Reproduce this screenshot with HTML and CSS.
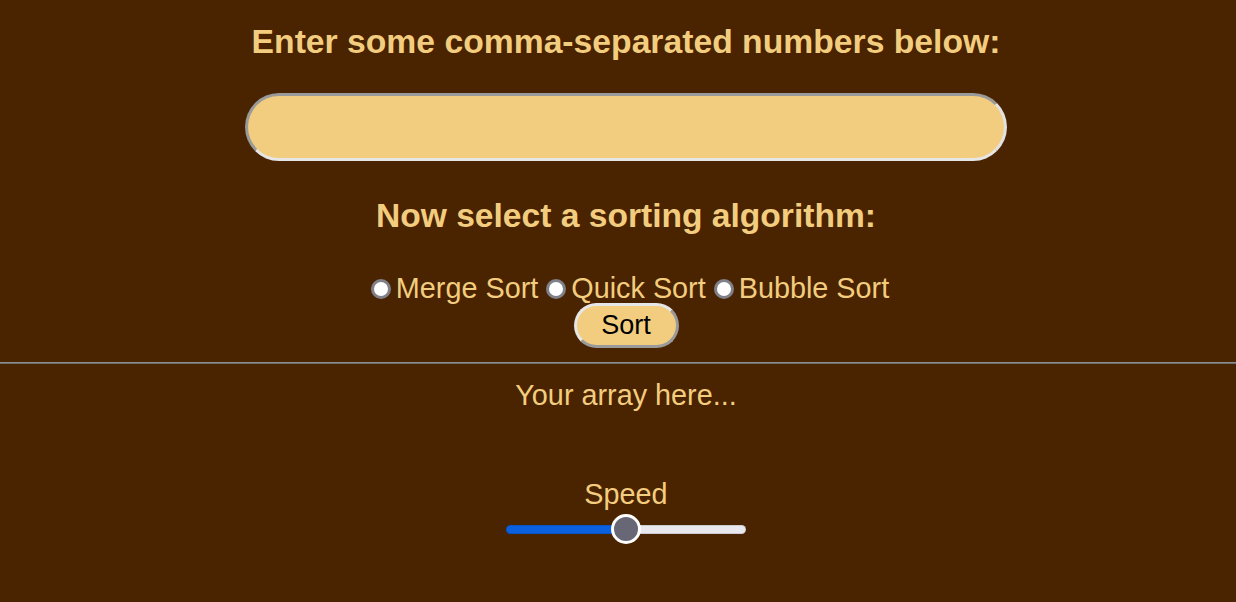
FILE: index.html
```html
<!DOCTYPE html>
<html>
<head>
<meta charset="utf-8">
<link rel="stylesheet" href="styles.css">
</head>
<body>
<section class="controls">
  <h1 class="title">Enter some comma-separated numbers below:</h1>
  <input class="numbers" type="text">
  <h2 class="subtitle">Now select a sorting algorithm:</h2>
  <div class="choices">
    <label class="choice"><input type="radio" name="algo" class="radio">Merge Sort</label>
    <label class="choice"><input type="radio" name="algo" class="radio">Quick Sort</label>
    <label class="choice"><input type="radio" name="algo" class="radio">Bubble Sort</label>
  </div>
  <button class="sort-btn">Sort</button>
</section>
<hr class="divider">
<section class="output">
  <p class="array">Your array here...</p>
  <p class="speed-label">Speed</p>
  <input class="speed" type="range" min="0" max="100" value="50">
</section>
</body>
</html>
```
FILE: styles.css
```css
html, body {
  margin: 0;
  padding: 0;
}
body {
  background: #4a2300;
  color: #f3cd7f;
  font-family: "Liberation Sans", Arial, sans-serif;
  width: 1236px;
  height: 602px;
  overflow: hidden;
}
.controls, .output {
  display: flex;
  flex-direction: column;
  align-items: center;
  padding-left: 16px;
}
.title {
  margin: 22px 0 0;
  font-size: 33.7px;
  line-height: 38px;
  font-weight: bold;
}
.numbers {
  margin-top: 33px;
  width: 762px;
  height: 68px;
  box-sizing: border-box;
  border-radius: 34px;
  border: 3px solid;
  border-color: #9a9a9a #e2e2e2 #e6e6e6 #9a9a9a;
  background: #f2cd80;
  outline: none;
}
.subtitle {
  margin: 35px 0 0;
  font-size: 33.6px;
  line-height: 40px;
  font-weight: bold;
}
.choices {
  margin-top: 35px;
  padding-left: 8px;
  display: flex;
  align-items: center;
  font-size: 28.8px;
  line-height: 34px;
}
.choice {
  display: flex;
  align-items: center;
  margin-right: 8px;
}
.choice:last-child { margin-right: 0; }
.radio {
  appearance: none;
  -webkit-appearance: none;
  width: 20px;
  height: 20px;
  margin: 1px 5px 0 0;
  border-radius: 50%;
  border: 3.5px solid #80808a;
  background: #fff;
  box-sizing: border-box;
}
.sort-btn {
  margin-top: -2px;
  width: 105px;
  height: 45px;
  border-radius: 23px;
  border: 3px solid;
  border-color: #e6e6e6 #9a9a9a #9a9a9a #e6e6e6;
  background: #f2cd80;
  color: #000;
  font-family: "Liberation Sans", Arial, sans-serif;
  font-size: 27px;
  padding: 0;
}
.divider {
  margin: 14px 0 0;
  border: 0;
  border-top: 1px solid #8e8e8e;
  border-bottom: 1px solid #6c6c6c;
  height: 0;
}
.array {
  margin: 14px 0 0;
  font-size: 28.8px;
  line-height: 34px;
}
.speed-label {
  margin: 65px 0 0;
  font-size: 28.8px;
  line-height: 34px;
}
.speed {
  -webkit-appearance: none;
  appearance: none;
  margin: 3px 0 0;
  width: 240px;
  height: 30px;
  background: transparent;
}
.speed::-webkit-slider-runnable-track {
  height: 9px;
  border-radius: 5px;
  background: linear-gradient(to right, #0a60df 0, #0a60df 50%, #e8e8ee 50%, #e8e8ee 100%);
  box-shadow: inset 0 0 0 1px rgba(0,0,0,0.12);
}
.speed::-webkit-slider-thumb {
  -webkit-appearance: none;
  width: 30px;
  height: 30px;
  margin-top: -10.5px;
  border-radius: 50%;
  background: #676776;
  border: 3px solid #fff;
  box-sizing: border-box;
}
```
